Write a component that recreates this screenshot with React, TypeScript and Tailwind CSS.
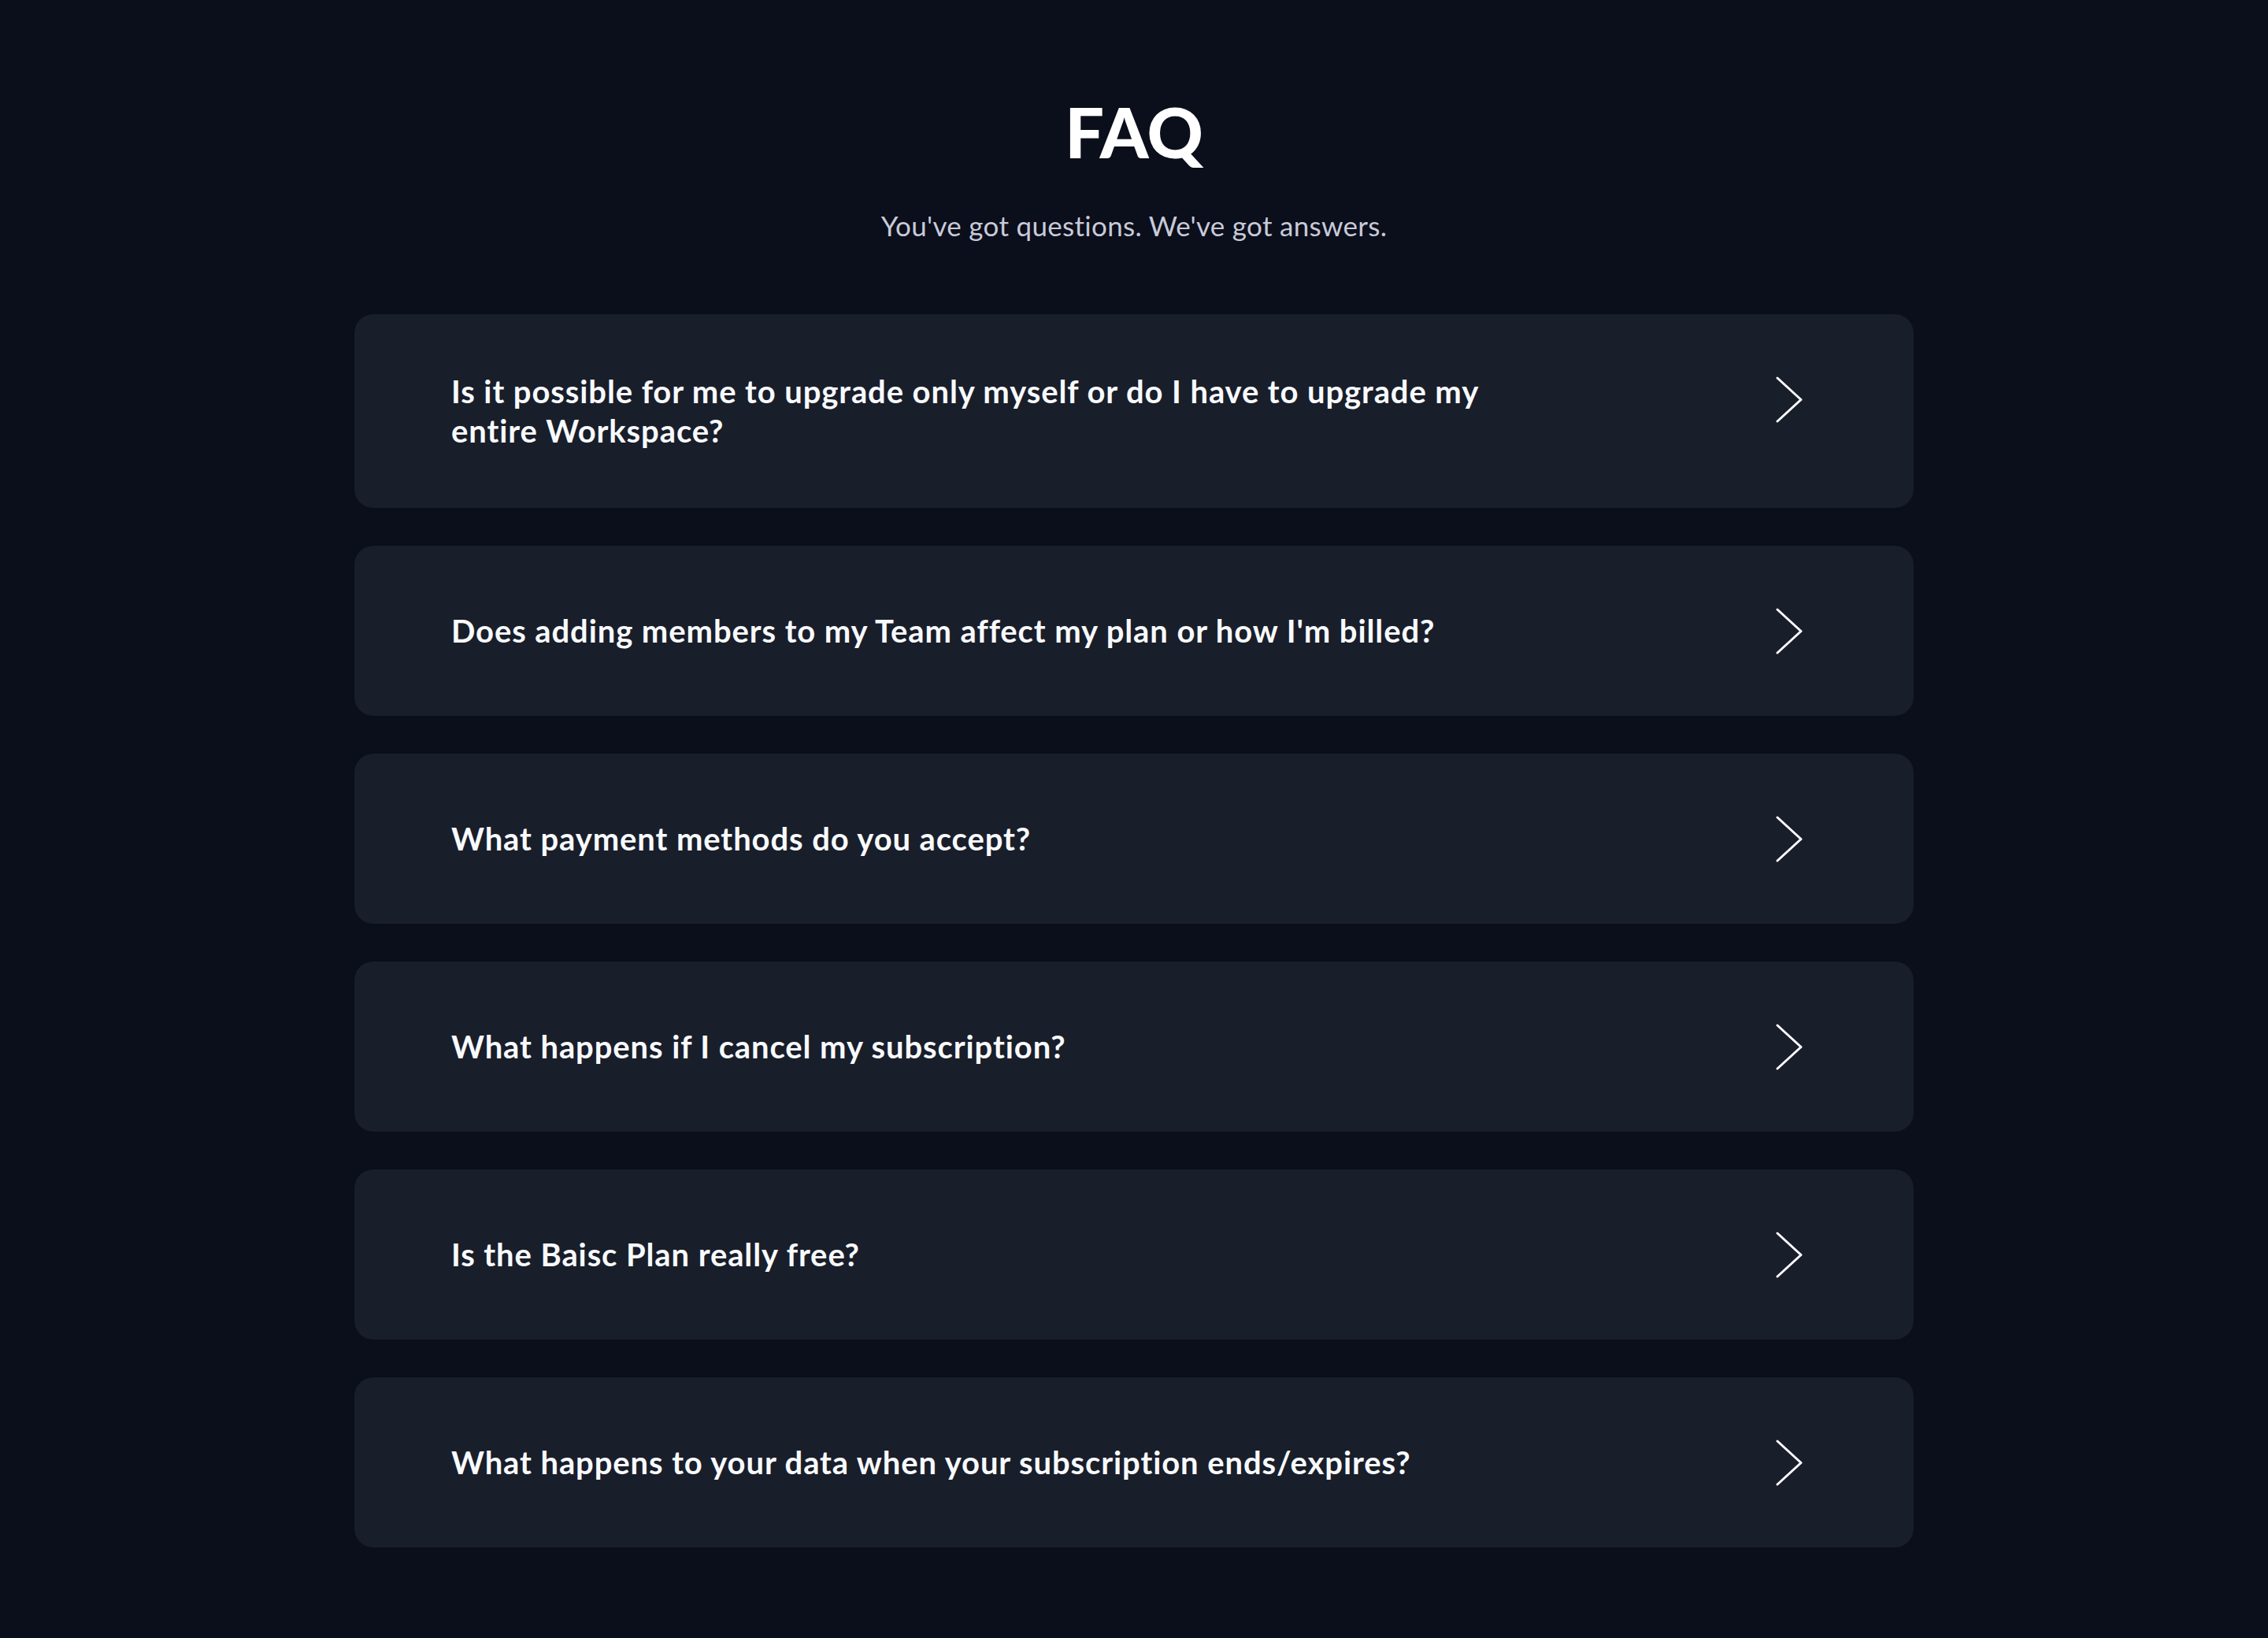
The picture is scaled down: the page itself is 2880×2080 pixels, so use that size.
import React from "react";

const questions = [
  "Is it possible for me to upgrade only myself or do I have to upgrade my entire Workspace?",
  "Does adding members to my Team affect my plan or how I'm billed?",
  "What payment methods do you accept?",
  "What happens if I cancel my subscription?",
  "Is the Baisc Plan really free?",
  "What happens to your data when your subscription ends/expires?",
];

function Chevron() {
  return (
    <svg width="36" height="61" viewBox="0 0 36 61" fill="none">
      <path
        d="M3 3 L33 30.5 L3 58"
        stroke="#ffffff"
        strokeWidth="3"
        strokeLinecap="round"
        strokeLinejoin="round"
      />
    </svg>
  );
}

function FaqItem({ question }: { question: string }) {
  return (
    <button
      type="button"
      className="w-full flex items-start justify-between bg-[#191e2b] rounded-[24px] pl-[123px] pr-[140px] py-[73px] text-left"
    >
      <div className="min-h-[70px] flex items-center">
        <span className="max-w-[1360px] text-[40px] leading-[50px] font-bold tracking-[0.9px] text-[#f8fafc]">
          {question}
        </span>
      </div>
      <div className="h-[70px] flex items-center">
        <Chevron />
      </div>
    </button>
  );
}

export default function App() {
  return (
    <div
      className="min-h-screen bg-[#0b0e1b] pt-[123px] pb-[112px]"
      style={{ fontFamily: "Lato, 'Noto Sans', sans-serif" }}
    >
      <div className="flex flex-col items-center text-center">
        <h1 className="text-[88px] leading-none font-black text-white">FAQ</h1>
        <p className="mt-[54px] text-[35px] leading-[42px] tracking-[0.3px] text-[#c8cad8]">
          You've got questions. We've got answers.
        </p>
      </div>

      <div className="mx-auto mt-[92px] w-[1980px] flex flex-col gap-[48px]">
        {questions.map((q) => (
          <FaqItem key={q} question={q} />
        ))}
      </div>
    </div>
  );
}
